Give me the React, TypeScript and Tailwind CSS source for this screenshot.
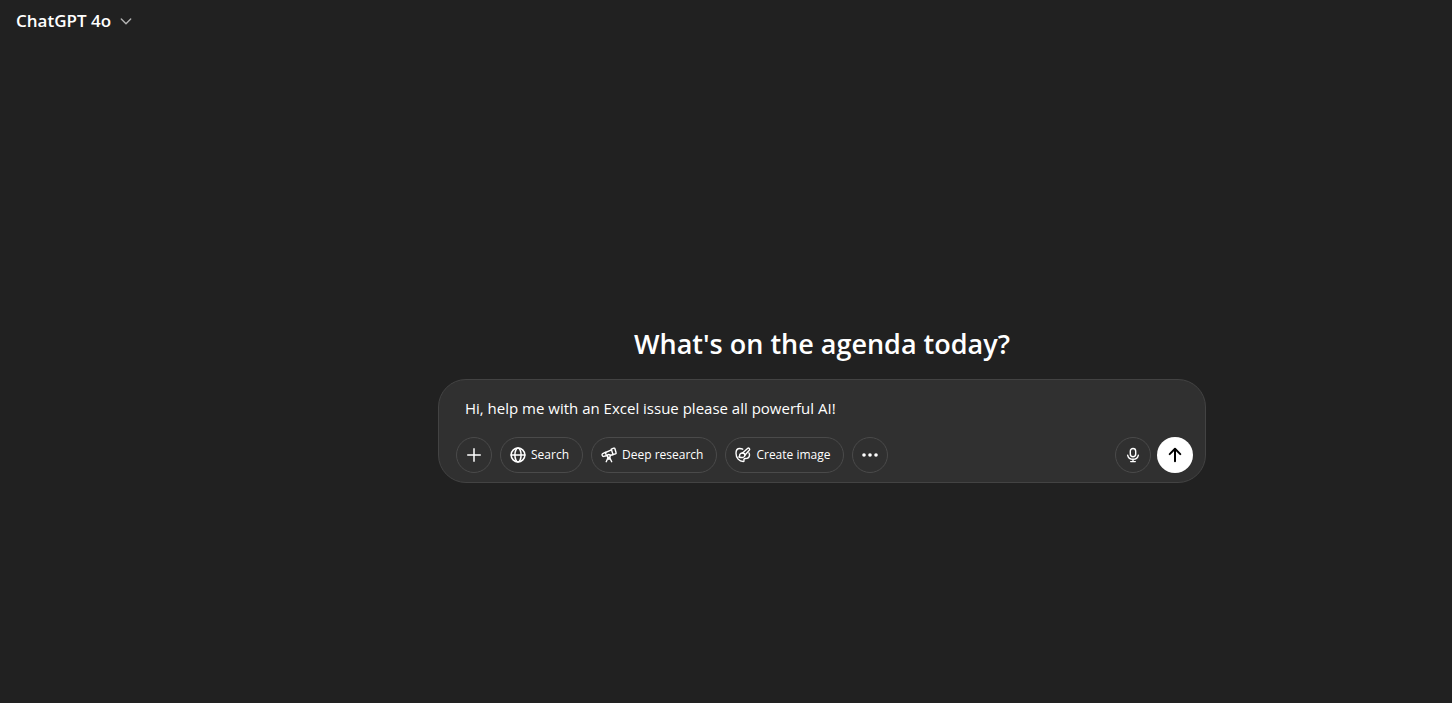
import React, { useState } from 'react';

const iconProps = {
  width: 18,
  height: 18,
  viewBox: '0 0 18 18',
  fill: 'none',
  stroke: 'currentColor',
  strokeWidth: 1.5,
  strokeLinecap: 'round' as const,
  strokeLinejoin: 'round' as const,
  'aria-hidden': true,
};

const ChevronIcon = () => (
  <svg {...iconProps} strokeWidth={1.4} className="text-[#b4b4b4]">
    <path d="M4.300 7l4.700 4.700L13.700 7" />
  </svg>
);

const PlusIcon = () => (
  <svg {...iconProps} strokeLinecap="butt">
    <path d="M9 2.2v13.6M2.2 9h13.6" />
  </svg>
);

const GlobeIcon = () => (
  <svg {...iconProps}>
    <circle cx="9" cy="9" r="6.9" />
    <ellipse cx="9" cy="9" rx="3.1" ry="6.9" />
    <path d="M2.1 9h13.8" />
  </svg>
);

const TelescopeIcon = () => (
  <svg {...iconProps} strokeWidth={1.4}>
    <path d="M11.300 3.200l2.400-1c.5-.2 1 0 1.200.5l1.200 4c.2.5-.1 1-.6 1.100l-2.500.7z" />
    <path d="M11.500 3.900L5.500 6.500" />
    <path d="M5.300 6.300l-2.600 1.300c-.6.300-.8.800-.6 1.400l.2.600c.2.600.7.900 1.300.8l2.900-.6z" />
    <path d="M10.500 9.300l2.400-.6" />
    <circle cx="8.800" cy="10" r="1.500" />
    <path d="M8.200 11.400l-2 4.300M9.500 11.400l2.200 4.300M8.900 11.700v1.700" />
  </svg>
);

const BrushIcon = () => (
  <svg {...iconProps} strokeWidth={1.4}>
    <path d="M8.700 3.200C7.700 2.700 6.800 2.500 5.700 2.500C3.400 2.500 2 4.400 2 7.200C2 11.900 5.200 15.500 9.200 15.500C10 15.500 10.300 15 10 14.200C9.700 13.200 10.200 12.600 11.300 12.500C13.800 12.400 15.500 11 15.500 8.900C15.500 8.200 15.300 7.500 14.900 6.900" />
    <path d="M8.500 7l5-4.500c.6-.5 1.300-.5 1.800 0s.5 1.200 0 1.800l-4.500 5" />
    <path d="M8.500 7c-1.800-.1-2.900 1-2.900 2.600 0 .6-.3 1-.7 1.400 2.800 1 6.200.5 6.100-1.900-.1-1.100-1-2-2.500-2.100z" />
  </svg>
);

const DotsIcon = () => (
  <svg {...iconProps} fill="currentColor" stroke="none">
    <circle cx="3" cy="9" r="1.8" />
    <circle cx="9" cy="9" r="1.8" />
    <circle cx="15" cy="9" r="1.8" />
  </svg>
);

const MicIcon = () => (
  <svg {...iconProps} strokeWidth={1.4}>
    <rect x="6.300" y="2.500" width="5.400" height="8.200" rx="2.700" />
    <path d="M3.700 9.300c.5 2.300 2.600 4 5.300 4s4.800-1.700 5.300-4M9 13.400v2.200M6.700 15.600h4.600" />
  </svg>
);

const ArrowIcon = () => (
  <svg {...iconProps} strokeWidth={2}>
    <path d="M9 15.300V3M3.700 8.100L9 2.800l5.300 5.300" />
  </svg>
);

const tools = [
  { label: 'Search', icon: GlobeIcon },
  { label: 'Deep research', icon: TelescopeIcon },
  { label: 'Create image', icon: BrushIcon },
];

const RoundButton = ({ label, children }: { label: string; children: React.ReactNode }) => (
  <button
    type="button"
    aria-label={label}
    className="flex size-9 shrink-0 items-center justify-center rounded-full border border-[#4a4a4a] hover:bg-white/5"
  >
    {children}
  </button>
);

const Composer = () => {
  const [prompt, setPrompt] = useState('Hi, help me with an Excel issue please all powerful AI!');

  return (
    <form
      onSubmit={(e) => e.preventDefault()}
      className="w-full max-w-3xl rounded-[28px] border border-[#434343] bg-[#303030] pt-4 pr-3 pb-[9px] pl-[17px]"
    >
      <textarea
        aria-label="Message"
        rows={1}
        value={prompt}
        onChange={(e) => setPrompt(e.target.value)}
        className="block h-6 w-full resize-none overflow-hidden bg-transparent px-[9px] text-[15px] leading-6 text-white outline-none"
      />
      <div className="mt-[17px] flex items-center justify-between">
        <div className="flex items-center gap-2">
          <RoundButton label="Add photos and files">
            <PlusIcon />
          </RoundButton>
          {tools.map(({ label, icon: Icon }) => (
            <button
              key={label}
              type="button"
              className="flex h-9 items-center gap-1 rounded-full border border-[#4a4a4a] pr-[13px] pl-2 text-xs whitespace-nowrap hover:bg-white/5"
            >
              <Icon />
              {label}
            </button>
          ))}
          <RoundButton label="More tools">
            <DotsIcon />
          </RoundButton>
        </div>
        <div className="flex items-center gap-1.5">
          <RoundButton label="Dictate">
            <MicIcon />
          </RoundButton>
          <button
            type="submit"
            aria-label="Send"
            className="flex size-9 shrink-0 items-center justify-center rounded-full bg-white text-black hover:opacity-80"
          >
            <ArrowIcon />
          </button>
        </div>
      </div>
    </form>
  );
};

const App: React.FC = () => {
  return (
    <div className="flex min-h-screen flex-col bg-[#212121] font-['Open_Sans','Noto_Sans',sans-serif] text-white">
      <header className="flex h-[42px] items-center px-4">
        <button type="button" className="flex items-center gap-1.5 text-[17px] font-semibold">
          ChatGPT 4o
          <ChevronIcon />
        </button>
      </header>
      <main className="flex flex-1 flex-col items-center justify-center gap-[18px] pt-16 pl-48">
        <h1 className="text-[27px] leading-[34px] font-semibold">What's on the agenda today?</h1>
        <Composer />
      </main>
    </div>
  );
};

export default App;
